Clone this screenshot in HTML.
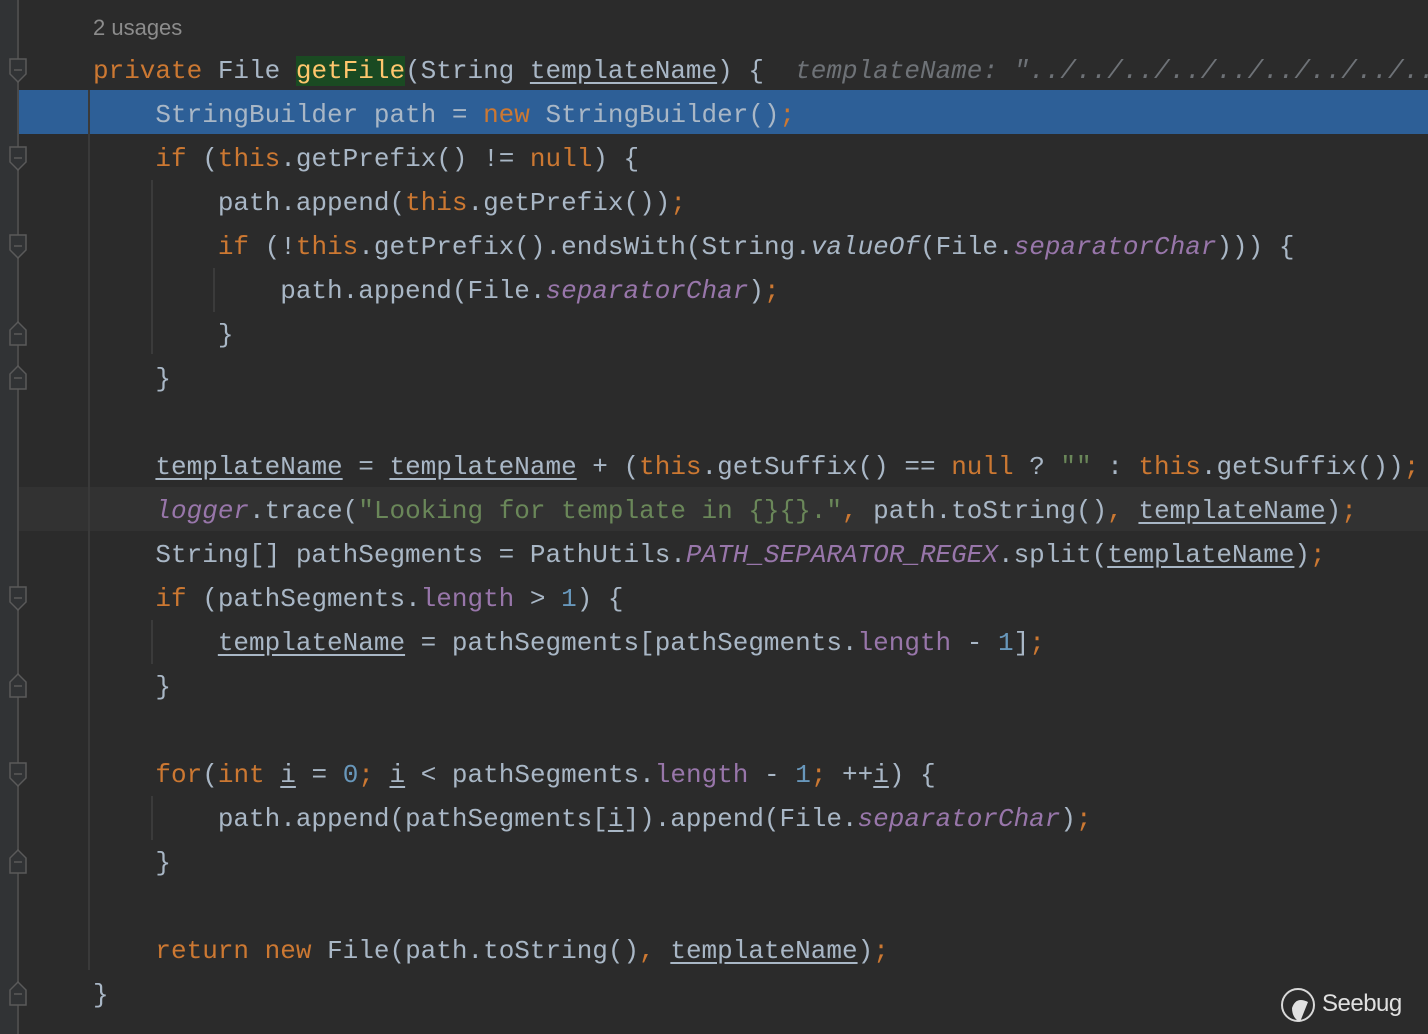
<!DOCTYPE html>
<html><head><meta charset="utf-8"><style>
html,body{margin:0;padding:0;}
body{width:1428px;height:1034px;background:#2b2b2b;position:relative;overflow:hidden;font-family:"Liberation Mono",monospace;font-size:26px;color:#a9b7c6;}
.gut{position:absolute;left:0;top:0;width:18px;height:1034px;background:#313335;}
.gl{position:absolute;left:17px;top:0;width:2px;height:1034px;background:#4a4a4a;}
.l{position:absolute;left:93px;height:44px;line-height:48px;white-space:pre;}
.k{color:#cc7832}.m{color:#ffc66d}.s{color:#6a8759}.n{color:#6897bb}.p{color:#9876aa}.i{font-style:italic}.u{text-decoration:underline;text-underline-offset:4px}
.h{color:#6e7277;font-style:italic}
.ig{position:absolute;width:2px;background:#3b3b3b;}
.f{position:absolute;left:9px;}
</style></head><body>
<div class="gut"></div>
<div style="position:absolute;left:19px;top:90px;width:1409px;height:44px;background:#2d5f97"></div>
<div style="position:absolute;left:19px;top:487px;width:1409px;height:44px;background:#323232"></div>
<div class="gl"></div>
<div class="ig" style="left:88px;top:90px;height:880px;background:#3a3a3a"></div>
<div class="ig" style="left:151px;top:180px;height:174px"></div>
<div class="ig" style="left:213px;top:268px;height:44px"></div>
<div class="ig" style="left:151px;top:620px;height:44px"></div>
<div class="ig" style="left:151px;top:796px;height:44px"></div>
<svg class="f" style="top:58px" width="18" height="26"><path d="M1 1H17V16L9 24L1 16Z M5 12H13" fill="#313335" stroke="#5a5a5a" stroke-width="1.5"/></svg>
<svg class="f" style="top:146px" width="18" height="26"><path d="M1 1H17V16L9 24L1 16Z M5 12H13" fill="#313335" stroke="#5a5a5a" stroke-width="1.5"/></svg>
<svg class="f" style="top:234px" width="18" height="26"><path d="M1 1H17V16L9 24L1 16Z M5 12H13" fill="#313335" stroke="#5a5a5a" stroke-width="1.5"/></svg>
<svg class="f" style="top:586px" width="18" height="26"><path d="M1 1H17V16L9 24L1 16Z M5 12H13" fill="#313335" stroke="#5a5a5a" stroke-width="1.5"/></svg>
<svg class="f" style="top:762px" width="18" height="26"><path d="M1 1H17V16L9 24L1 16Z M5 12H13" fill="#313335" stroke="#5a5a5a" stroke-width="1.5"/></svg>
<svg class="f" style="top:320px" width="18" height="26"><path d="M1 25H17V10L9 2L1 10Z M5 14H13" fill="#313335" stroke="#5a5a5a" stroke-width="1.5"/></svg>
<svg class="f" style="top:364px" width="18" height="26"><path d="M1 25H17V10L9 2L1 10Z M5 14H13" fill="#313335" stroke="#5a5a5a" stroke-width="1.5"/></svg>
<svg class="f" style="top:672px" width="18" height="26"><path d="M1 25H17V10L9 2L1 10Z M5 14H13" fill="#313335" stroke="#5a5a5a" stroke-width="1.5"/></svg>
<svg class="f" style="top:848px" width="18" height="26"><path d="M1 25H17V10L9 2L1 10Z M5 14H13" fill="#313335" stroke="#5a5a5a" stroke-width="1.5"/></svg>
<svg class="f" style="top:980px" width="18" height="26"><path d="M1 25H17V10L9 2L1 10Z M5 14H13" fill="#313335" stroke="#5a5a5a" stroke-width="1.5"/></svg>

<div class="l" style="top:4px;font-family:'Liberation Sans',sans-serif;font-size:22px;color:#8c8c8c">2 usages</div>
<div class="l" style="top:47px"><span class="k">private </span>File <span class="m" style="background:#1a4a22">getFile</span>(String <span class="u">templateName</span>) {  <span class="h">templateName: "../../../../../../../../../.</span></div>
<div class="l" style="top:91px">    StringBuilder path = <span class="k">new </span>StringBuilder()<span class="k">;</span></div>
<div class="l" style="top:135px">    <span class="k">if </span>(<span class="k">this</span>.getPrefix() != <span class="k">null</span>) {</div>
<div class="l" style="top:179px">        path.append(<span class="k">this</span>.getPrefix())<span class="k">;</span></div>
<div class="l" style="top:223px">        <span class="k">if </span>(!<span class="k">this</span>.getPrefix().endsWith(String.<span class="i">valueOf</span>(File.<span class="p i">separatorChar</span>))) {</div>
<div class="l" style="top:267px">            path.append(File.<span class="p i">separatorChar</span>)<span class="k">;</span></div>
<div class="l" style="top:311px">        }</div>
<div class="l" style="top:355px">    }</div>
<div class="l" style="top:443px">    <span class="u">templateName</span> = <span class="u">templateName</span> + (<span class="k">this</span>.getSuffix() == <span class="k">null </span>? <span class="s">""</span> : <span class="k">this</span>.getSuffix())<span class="k">;</span></div>
<div class="l" style="top:487px">    <span class="p i">logger</span>.trace(<span class="s">"Looking for template in {}{}."</span><span class="k">, </span>path.toString()<span class="k">, </span><span class="u">templateName</span>)<span class="k">;</span></div>
<div class="l" style="top:531px">    String[] pathSegments = PathUtils.<span class="p i">PATH_SEPARATOR_REGEX</span>.split(<span class="u">templateName</span>)<span class="k">;</span></div>
<div class="l" style="top:575px">    <span class="k">if </span>(pathSegments.<span class="p">length</span> &gt; <span class="n">1</span>) {</div>
<div class="l" style="top:619px">        <span class="u">templateName</span> = pathSegments[pathSegments.<span class="p">length</span> - <span class="n">1</span>]<span class="k">;</span></div>
<div class="l" style="top:663px">    }</div>
<div class="l" style="top:751px">    <span class="k">for</span>(<span class="k">int </span><span class="u">i</span> = <span class="n">0</span><span class="k">; </span><span class="u">i</span> &lt; pathSegments.<span class="p">length</span> - <span class="n">1</span><span class="k">; </span>++<span class="u">i</span>) {</div>
<div class="l" style="top:795px">        path.append(pathSegments[<span class="u">i</span>]).append(File.<span class="p i">separatorChar</span>)<span class="k">;</span></div>
<div class="l" style="top:839px">    }</div>
<div class="l" style="top:927px">    <span class="k">return new </span>File(path.toString()<span class="k">, </span><span class="u">templateName</span>)<span class="k">;</span></div>
<div class="l" style="top:971px">}</div>

<svg style="position:absolute;left:1280px;top:986px" width="38" height="40"><circle cx="18" cy="19" r="16" fill="none" stroke="#d8d8d8" stroke-width="2"/><path d="M12 22 Q16 10 28 16 L20 36 Q12 32 12 22Z" fill="#e0e0e0"/></svg>
<div style="position:absolute;left:1322px;top:990px;font-family:'Liberation Sans',sans-serif;font-size:24px;color:#e0e0e0;letter-spacing:-0.5px">Seebug</div>
</body></html>
